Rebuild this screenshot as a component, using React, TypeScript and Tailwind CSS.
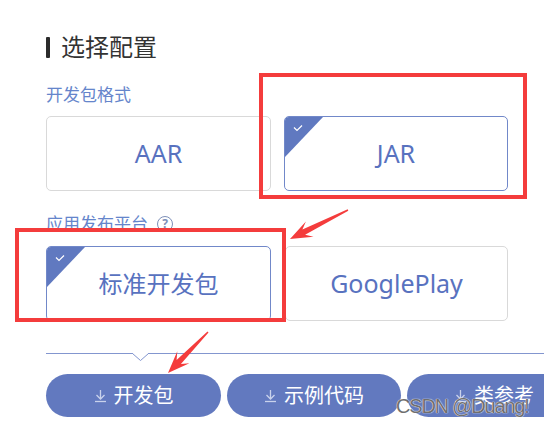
import type { ReactNode } from "react";

type Pt = [number, number];

// red annotation arrow: thin tail, barbed head at the tip
function arrowPoints(tail: Pt, tip: Pt, headLen = 22, headW = 17, tailW = 1.5, neckW = 6) {
  const dx = tip[0] - tail[0];
  const dy = tip[1] - tail[1];
  const len = Math.hypot(dx, dy);
  const ux = dx / len;
  const uy = dy / len;
  const nx = -uy;
  const ny = ux;
  const at = (d: number, w: number): Pt => [tip[0] - ux * d + nx * w, tip[1] - uy * d + ny * w];
  const pts: Pt[] = [
    [tail[0] + (nx * tailW) / 2, tail[1] + (ny * tailW) / 2],
    at(headLen * 0.7, neckW / 2),
    at(headLen, headW / 2),
    tip,
    at(headLen, -headW / 2),
    at(headLen * 0.7, -neckW / 2),
    [tail[0] - (nx * tailW) / 2, tail[1] - (ny * tailW) / 2],
  ];
  return pts.map((p) => `${p[0].toFixed(1)},${p[1].toFixed(1)}`).join(" ");
}

function OptionCard({ children, selected, latin }: { children: ReactNode; selected?: boolean; latin?: boolean }) {
  return (
    <div
      className={`relative flex items-center justify-center overflow-hidden rounded-[5px] border h-[75px] ${
        selected ? "border-[#7188c9]" : "border-[#d9d9d9]"
      }`}
    >
      {selected && (
        <svg className="absolute left-0 top-0" width="38" height="40" viewBox="0 0 38 40">
          <polygon points="0,0 38,0 0,40" fill="#6079c0" />
          <polyline points="9,10.5 12,13.5 17,8.5" fill="none" stroke="#fff" strokeWidth="1.2" />
        </svg>
      )}
      <span className={`text-[#5872bf] ${latin ? "text-[25px]" : "text-[24px]"} leading-none`}>{children}</span>
    </div>
  );
}

function DownloadIcon() {
  return (
    <svg width="13" height="14" viewBox="0 0 13 14" fill="none" stroke="#c9d2ec" strokeWidth="1.3">
      <line x1="6.5" y1="1" x2="6.5" y2="10" />
      <polyline points="2.5,6 6.5,10 10.5,6" />
      <line x1="1" y1="12.5" x2="12" y2="12.5" />
    </svg>
  );
}

function PillButton({ label, w }: { label: string; w: string }) {
  return (
    <div className={`flex h-[43px] shrink-0 items-center justify-center gap-[7px] rounded-full bg-[#6279bf] ${w}`}>
      <DownloadIcon />
      <span className="text-[20px] leading-none text-white">{label}</span>
    </div>
  );
}

export default function App() {
  return (
    <div className="relative h-[428px] w-[544px] overflow-hidden bg-white font-['Noto_Sans','Noto_Sans_CJK_SC',sans-serif]">
      <div className="pl-[46px] pt-[32px]">
        <div className="flex h-[30px] items-center">
          <div className="h-[21px] w-[4px] rounded-[1px] bg-[#2b2b2b]" />
          <span className="ml-[11px] text-[24px] leading-[30px] text-[#333]">选择配置</span>
        </div>

        <div className="mt-[22px] text-[17px] leading-[22px] text-[#6585cb]">开发包格式</div>
        <div className="mt-[10px] grid w-[462px] grid-cols-[225px_224px] gap-[13px]">
          <OptionCard latin>AAR</OptionCard>
          <OptionCard latin selected>
            JAR
          </OptionCard>
        </div>

        <div className="mt-[22px] flex h-[22px] items-center text-[17px] leading-[22px] text-[#6585cb]">
          应用发布平台
          <span className="ml-[9px] flex h-[16px] w-[16px] items-center justify-center rounded-full border border-[#7d8fb8] text-[12px] font-bold leading-none text-[#7d8fb8]">
            ?
          </span>
        </div>
        <div className="mt-[11px] grid w-[462px] grid-cols-[225px_223px] gap-[14px]">
          <OptionCard selected>标准开发包</OptionCard>
          <OptionCard latin>GooglePlay</OptionCard>
        </div>

        <div className="relative mt-[32px] h-px bg-[#8396cf]">
          <svg className="absolute left-[86px] top-[-1px]" width="17" height="10" viewBox="0 0 17 10">
            <rect x="1" y="0" width="15" height="3" fill="#fff" />
            <polyline points="0.5,1.5 8.5,8.5 16.5,1.5" fill="none" stroke="#8396cf" strokeWidth="1" />
          </svg>
        </div>

        <div className="mt-[20px] flex gap-[6px]">
          <PillButton label="开发包" w="w-[175px]" />
          <PillButton label="示例代码" w="w-[174px]" />
          <PillButton label="类参考" w="w-[174px]" />
        </div>
      </div>

      {/* annotations */}
      <div className="absolute left-[259px] top-[73px] h-[126px] w-[268px] border-4 border-[#f43c3c]" />
      <div className="absolute left-[15px] top-[228px] h-[94px] w-[271px] border-4 border-[#f43c3c]" />
      <svg className="absolute left-0 top-0" width="544" height="428">
        <polygon points={arrowPoints([348, 210], [290, 239])} fill="#f43c3c" />
        <polygon points={arrowPoints([208, 332], [168, 373])} fill="#f43c3c" />
      </svg>

      <div className="absolute left-[396px] top-[396px] font-['Liberation_Sans',sans-serif] text-[20px] leading-none tracking-[-1.2px] text-[#6f6f6f] [text-shadow:0_0_1px_#fff,0_0_1px_#fff]">
        CSDN @Duang!
      </div>
    </div>
  );
}
